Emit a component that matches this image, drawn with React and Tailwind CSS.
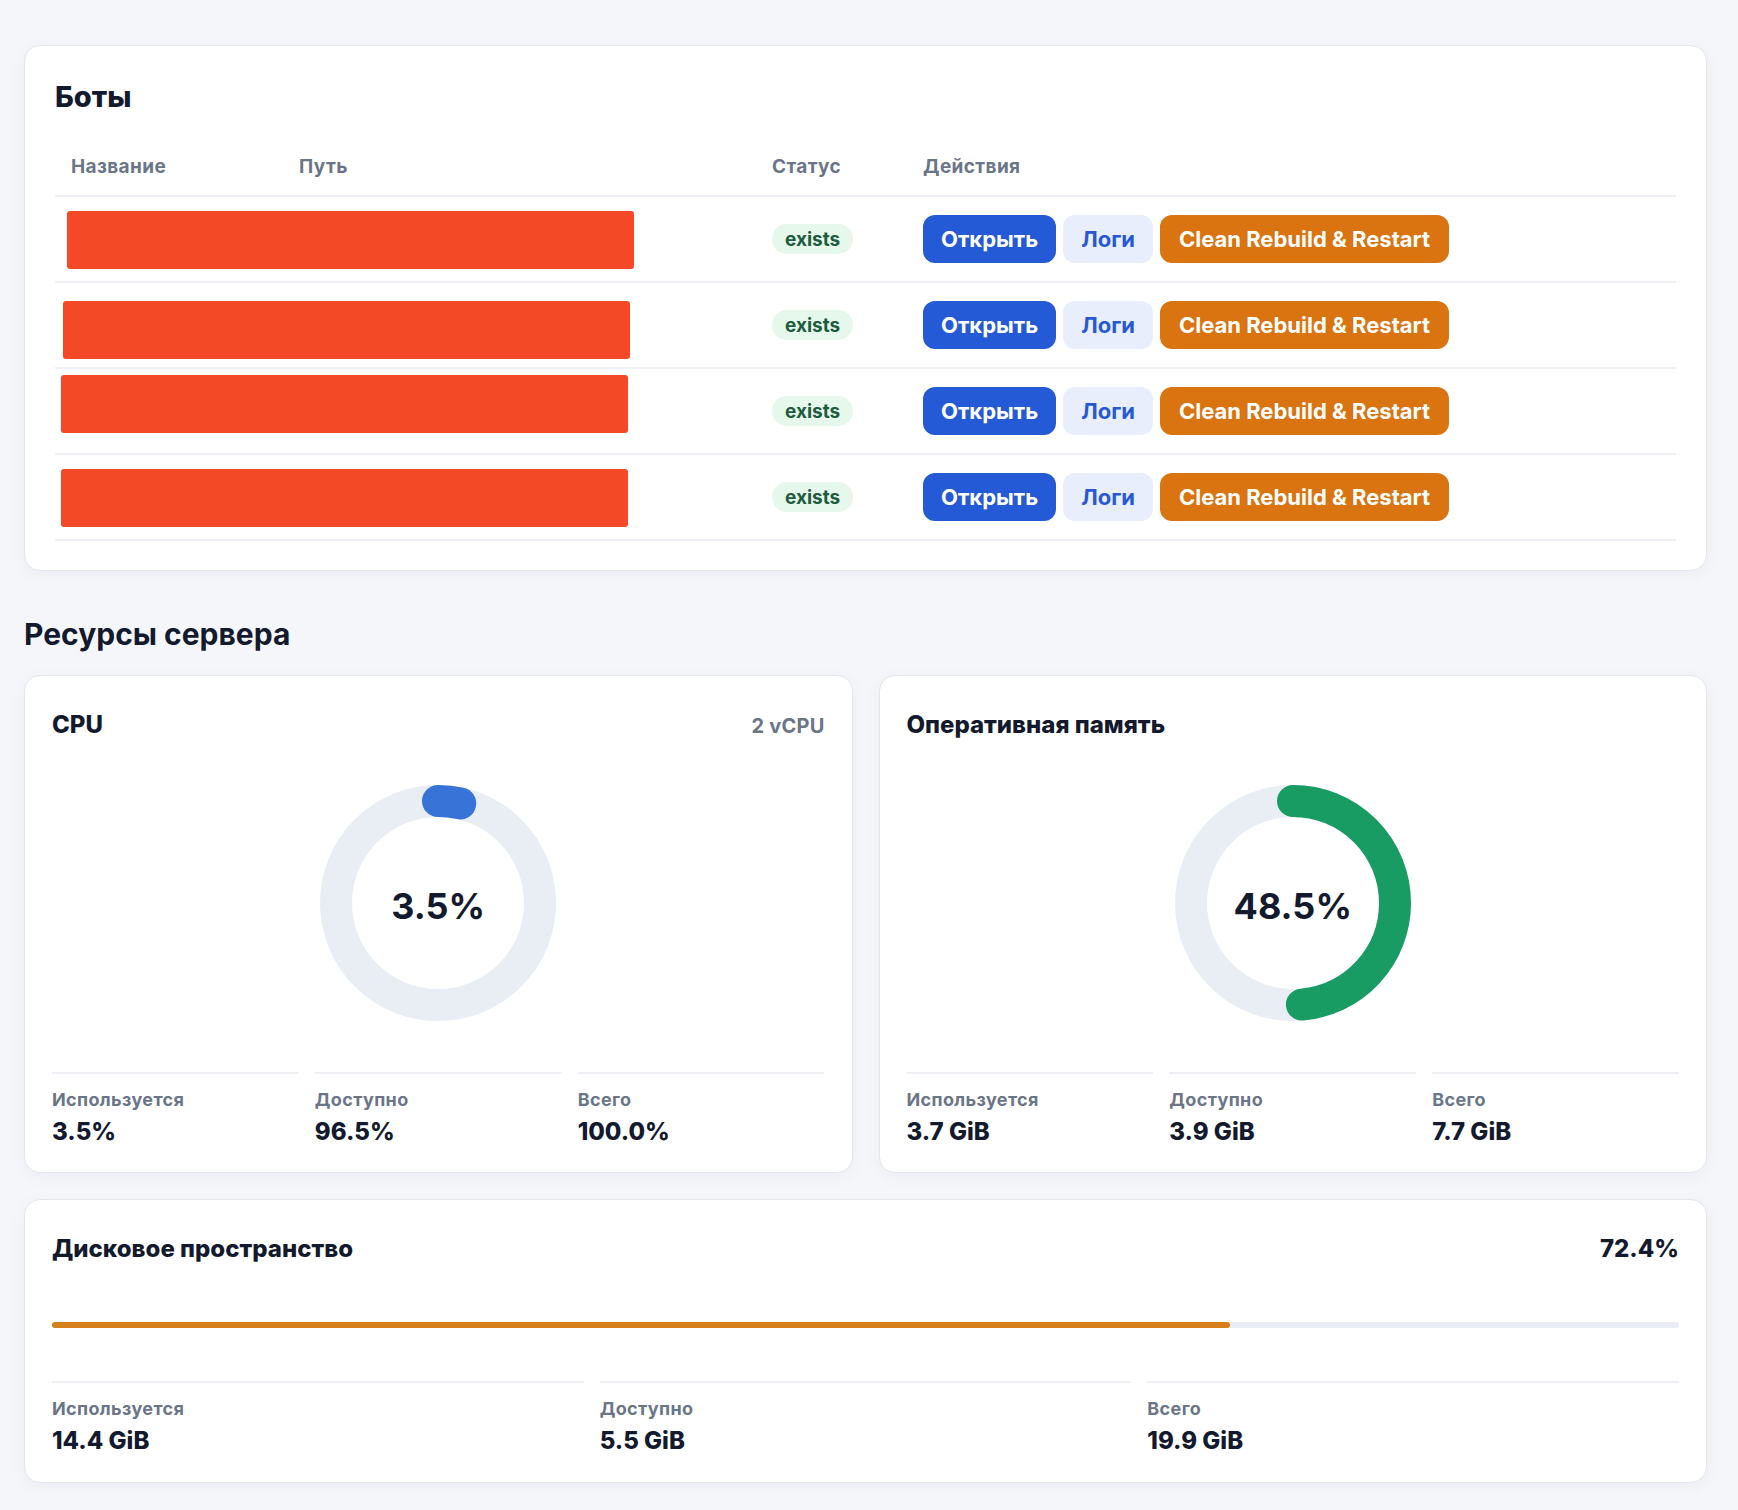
import React from 'react';

const bots = [
  { id: 1, mask: 'ml-[12px] mt-[14px]' },
  { id: 2, mask: 'ml-[8px] mt-[18px]' },
  { id: 3, mask: 'ml-[6px] mt-[6px]' },
  { id: 4, mask: 'ml-[6px] mt-[14px]' },
];

const cols = 'grid grid-cols-[228px_473px_151px_1fr]';

function Donut({ value, color }) {
  const r = 102;
  const c = 2 * Math.PI * r;
  return (
    <div className="relative mx-auto h-[236px] w-[236px]">
      <svg viewBox="0 0 236 236" className="h-full w-full -rotate-90">
        <circle cx="118" cy="118" r={r} fill="none" stroke="#e9edf4" strokeWidth="32" />
        <circle
          cx="118"
          cy="118"
          r={r}
          fill="none"
          stroke={color}
          strokeWidth="32"
          strokeLinecap="round"
          strokeDasharray={`${(c * value) / 100} ${c}`}
        />
      </svg>
      <div className="absolute inset-0 flex items-center justify-center pt-[6px] text-[36px] font-bold leading-none text-[#141a2e]">
        {value}%
      </div>
    </div>
  );
}

function Stats({ items, pad = 'pt-[14px]' }) {
  return (
    <div className="grid grid-cols-3 gap-4">
      {items.map((s) => (
        <div key={s.label} className={`border-t-2 border-[#eef0f5] ${pad}`}>
          <div className="text-[18px] font-bold leading-6 tracking-[0.02em] text-[#6b7588]">{s.label}</div>
          <div className="mt-1 text-2xl font-extrabold leading-8 text-[#141a2e]">{s.value}</div>
        </div>
      ))}
    </div>
  );
}

function Card({ className = '', children }) {
  return (
    <div className={`rounded-2xl border border-[#e3e6ee] bg-white shadow-[0_4px_18px_rgba(15,23,42,0.04)] ${className}`}>
      {children}
    </div>
  );
}

export default function App() {
  return (
    <div className="min-h-screen bg-[#f5f6fa] pb-[27px] pl-6 pr-[31px] pt-[45px] font-[Inter,sans-serif] text-[#141a2e]">
      {/* Bots table */}
      <Card className="px-[30px] pb-[29px] pt-[33px]">
        <h2 className="text-[29px] font-extrabold leading-9">Боты</h2>
        <div className="mt-6">
          <div className={`${cols} border-b-2 border-[#eef0f5] pb-[14px] pt-[14px] text-[19px] font-bold leading-7 tracking-[0.02em] text-[#6b7588]`}>
            <div className="px-4">Название</div>
            <div className="px-4">Путь</div>
            <div className="px-4">Статус</div>
            <div className="px-4">Действия</div>
          </div>
          {bots.map((b) => (
            <div key={b.id} className={`${cols} items-center border-b-2 border-[#eef0f5]`}>
              <div className="col-span-2 self-start">
                <div className={`h-[58px] w-[567px] rounded-[3px] bg-[#f44927] ${b.mask}`} />
              </div>
              <div className="px-4">
                <span className="inline-flex h-[30px] items-center rounded-full bg-[#e6f7ec] px-[13px] pt-[2px] text-[19px] font-bold text-[#1d5c3c]">
                  exists
                </span>
              </div>
              <div className="flex gap-[7px] px-4 py-[18px] text-[22px] font-bold leading-7">
                <button className="rounded-xl bg-[#255ad6] px-[18px] py-[10px] text-white">Открыть</button>
                <button className="rounded-xl bg-[#e8eefb] px-[18px] py-[10px] text-[#2859d4]">Логи</button>
                <button className="rounded-xl bg-[#d97410] px-[19px] py-[10px] text-white">Clean Rebuild &amp; Restart</button>
              </div>
            </div>
          ))}
        </div>
      </Card>

      {/* Server resources */}
      <h2 className="mt-[45px] text-[30px] font-bold leading-9">Ресурсы сервера</h2>
      <div className="mt-[23px] grid grid-cols-2 gap-[26px]">
        <Card className="px-[27px] pb-6 pt-[33px]">
          <div className="flex h-8 items-center justify-between">
            <h3 className="text-2xl font-extrabold leading-8">CPU</h3>
            <span className="pt-[2px] text-[20px] font-bold leading-8 tracking-[0.01em] text-[#6b7588]">2 vCPU</span>
          </div>
          <div className="mt-[44px]">
            <Donut value={3.5} color="#3874d8" />
          </div>
          <div className="mt-[51px]">
            <Stats
              items={[
                { label: 'Используется', value: '3.5%' },
                { label: 'Доступно', value: '96.5%' },
                { label: 'Всего', value: '100.0%' },
              ]}
            />
          </div>
        </Card>

        <Card className="px-[27px] pb-6 pt-[33px]">
          <div className="flex h-8 items-center justify-between">
            <h3 className="text-2xl font-extrabold leading-8">Оперативная память</h3>
          </div>
          <div className="mt-[44px]">
            <Donut value={48.5} color="#189c63" />
          </div>
          <div className="mt-[51px]">
            <Stats
              items={[
                { label: 'Используется', value: '3.7 GiB' },
                { label: 'Доступно', value: '3.9 GiB' },
                { label: 'Всего', value: '7.7 GiB' },
              ]}
            />
          </div>
        </Card>
      </div>

      {/* Disk */}
      <Card className="mt-[26px] px-[27px] pb-[25px] pt-[33px]">
        <div className="flex h-8 items-center justify-between">
          <h3 className="text-2xl font-extrabold leading-8">Дисковое пространство</h3>
          <span className="text-2xl font-extrabold leading-8">72.4%</span>
        </div>
        <div className="mt-[57px] h-[6px] rounded-full bg-[#e9ecf2]">
          <div className="h-full rounded-full bg-[#d5801b]" style={{ width: '72.4%' }} />
        </div>
        <div className="mt-[53px]">
          <Stats
            items={[
              { label: 'Используется', value: '14.4 GiB' },
              { label: 'Доступно', value: '5.5 GiB' },
              { label: 'Всего', value: '19.9 GiB' },
            ]}
          />
        </div>
      </Card>
    </div>
  );
}
